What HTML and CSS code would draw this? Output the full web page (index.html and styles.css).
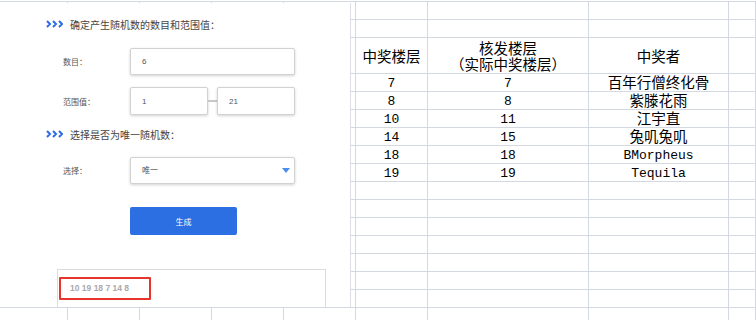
FILE: index.html
```html
<!DOCTYPE html>
<html lang="zh-CN">
<head>
  <meta charset="UTF-8">
  <meta name="viewport" content="width=device-width, initial-scale=1.0">
  <title>随机数生成</title>
  <link rel="stylesheet" href="styles.css">
</head>
<body>
  <div class="sheet" id="sheet"></div>

  <div class="panel">
    <h3 class="title">
      <svg class="arrows" width="17" height="8" viewBox="0 0 17 8">
        <path d="M1 1 L4 4 L1 7 M7 1 L10 4 L7 7 M13 1 L16 4 L13 7" fill="none" stroke="#2e6be6" stroke-width="2"/>
      </svg>
      确定产生随机数的数目和范围值：
    </h3>

    <div class="field f1">
      <label>数目：</label>
      <input class="box" type="text" value="6">
    </div>

    <div class="field f2">
      <label>范围值：</label>
      <input class="box short" type="text" value="1">
      <span class="dash"></span>
      <input class="box short" type="text" value="21">
    </div>

    <h3 class="title t2">
      <svg class="arrows" width="17" height="8" viewBox="0 0 17 8">
        <path d="M1 1 L4 4 L1 7 M7 1 L10 4 L7 7 M13 1 L16 4 L13 7" fill="none" stroke="#2e6be6" stroke-width="2"/>
      </svg>
      选择是否为唯一随机数：
    </h3>

    <div class="field f3">
      <label>选择：</label>
      <div class="select-wrap">
        <select class="box">
          <option>唯一</option>
          <option>不唯一</option>
        </select>
        <span class="caret"></span>
      </div>
    </div>

    <button class="btn" type="button">生成</button>

    <div class="result">
      <div class="nums">10 19 18 7 14 8</div>
    </div>
  </div>

  <script>
    const sheet = document.querySelector("#sheet");
    const cols = 9;
    const totalRows = 18;

    // rows of the sheet that hold data, columns F to H
    const data = {
      2: ["中奖楼层", "核发楼层<br>（实际中奖楼层）", "中奖者"],
      3: ["7", "7", "百年行僧终化骨"],
      4: ["8", "8", "紫滕花雨"],
      5: ["10", "11", "江宇直"],
      6: ["14", "15", "兔叽兔叽"],
      7: ["18", "18", "BMorpheus"],
      8: ["19", "19", "Tequila"]
    };

    for (let r = 0; r < totalRows; r++) {
      for (let c = 0; c < cols; c++) {
        const cell = document.createElement("div");
        cell.className = "cell";
        if (r === 2) cell.classList.add("hd");
        const row = data[r];
        if (row && c >= 5 && c <= 7) {
          const text = row[c - 5];
          if (/[\u4e00-\u9fff]/.test(text)) cell.classList.add("cn");
          cell.innerHTML = text;
        }
        sheet.appendChild(cell);
      }
    }
  </script>
</body>
</html>
```

FILE: styles.css
```css
* {
  box-sizing: border-box;
}

body {
  margin: 0;
  padding-top: 1px;
  width: 756px;
  height: 320px;
  overflow: hidden;
  position: relative;
  background-color: white;
  font-family: "Liberation Sans", "Noto Sans CJK SC", sans-serif;
}

/* spreadsheet behind the form */
.sheet {
  display: grid;
  grid-template-columns: 68px 72px 72px 72px 72px 72px 161px 140px 1fr;
  grid-template-rows: 18px 18px 36px;
  grid-auto-rows: 18px;
  border-top: 1px solid #d3d8e2;
  font-family: "Liberation Mono", "Noto Sans CJK SC", monospace;
  font-size: 13px;
  color: #000;
}

.cell {
  border-right: 1px solid #d3d8e2;
  border-bottom: 1px solid #d3d8e2;
  display: flex;
  align-items: center;
  justify-content: center;
  text-align: center;
  padding-top: 3px;
  line-height: 16px;
  white-space: nowrap;
}

.cell.cn {
  font-size: 14.5px;
}

.cell.hd {
  padding-top: 4px;
}

/* form panel */
.panel {
  position: absolute;
  left: 0;
  top: 3px;
  width: 351px;
  height: 304px;
  background-color: white;
  border-right: 1px solid #dcdfe6;
  padding-top: 14px;
  overflow: hidden;
}

.title {
  display: flex;
  align-items: center;
  gap: 7px;
  height: 14px;
  margin: 0 0 0 46px;
  font-size: 10px;
  font-weight: normal;
  color: #444;
}

.title.t2 {
  margin-top: 12px;
}

.field {
  display: flex;
  align-items: center;
  margin-left: 63px;
}

.field label {
  width: 67px;
  font-size: 8px;
  color: #555;
}

.f1 {
  margin-top: 17px;
}

.f2 {
  margin-top: 12px;
}

.f2 .box {
  height: 28px;
}

.f3 {
  margin-top: 16px;
}

.box {
  width: 165px;
  height: 27px;
  margin: 0;
  border: 1px solid #d2d2d2;
  border-radius: 2px;
  box-shadow: 0 1px 3px rgba(0, 0, 0, 0.18);
  padding: 0 0 0 11px;
  font-family: inherit;
  font-size: 8px;
  color: #555;
  background-color: white;
  outline: none;
}

.box.short {
  width: 78px;
}

select.box {
  appearance: none;
  -webkit-appearance: none;
}

.dash {
  width: 9px;
  height: 2px;
  background-color: #c8c8c8;
}

.select-wrap {
  position: relative;
}

.caret {
  position: absolute;
  right: 5px;
  top: 11px;
  border-left: 4px solid transparent;
  border-right: 4px solid transparent;
  border-top: 5px solid #4a8ef0;
}

.btn {
  display: block;
  width: 107px;
  height: 28px;
  margin: 23px 0 0 130px;
  border: none;
  border-radius: 2px;
  background-color: #2c6fe2;
  color: white;
  font-family: inherit;
  font-size: 8px;
  cursor: pointer;
}

.result {
  width: 269px;
  height: 40px;
  margin: 34px 0 0 57px;
  border: 1px solid #dcdcdc;
  padding: 7px 0 0 1px;
}

.nums {
  width: 92px;
  height: 23px;
  border: 2px solid #e8352b;
  border-radius: 1px;
  padding-left: 9px;
  line-height: 19px;
  font-size: 8.5px;
  font-weight: bold;
  color: #aaa;
}
```
